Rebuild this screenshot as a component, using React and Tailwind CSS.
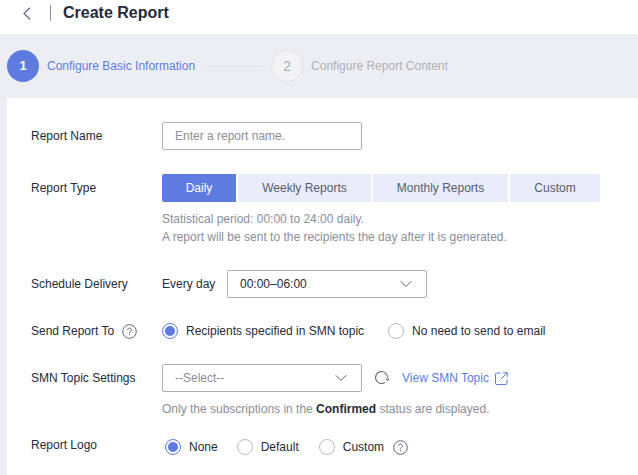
import React from "react";
import { ChevronDown } from "lucide-react";

const HelpIcon = () => (
  <svg width="15" height="15" viewBox="0 0 15 15" fill="none" className="shrink-0">
    <circle cx="7.5" cy="7.5" r="6.8" stroke="#5f6680" strokeWidth="1" />
    <path d="M5.6 5.9c0-1.1.9-1.8 1.9-1.8s1.9.7 1.9 1.7c0 1.5-1.9 1.5-1.9 3" stroke="#5f6680" strokeWidth="1" />
    <rect x="7" y="10" width="1" height="1.2" fill="#5f6680" />
  </svg>
);

const Radio = ({ checked, label, className = "" }) => (
  <div className={`flex items-center ${className}`}>
    {checked ? (
      <span className="flex h-4 w-4 items-center justify-center rounded-full border border-[#5e7ce0]">
        <span className="h-2.5 w-2.5 rounded-full bg-[#5e7ce0]" />
      </span>
    ) : (
      <span className="h-4 w-4 rounded-full border border-[#b8bcc9]" />
    )}
    <span className="ml-2 text-[#252b3a]">{label}</span>
  </div>
);

const Row = ({ label, children, className = "" }) => (
  <div className={`flex ${className}`}>
    <div className="w-[131px] shrink-0 text-[#252b3a]">{label}</div>
    {children}
  </div>
);

const App = () => (
  <div className="h-[475px] w-[638px] overflow-hidden bg-[#edeef4] font-['Liberation_Sans',Arial,sans-serif] text-xs leading-[18px]">
    <header className="flex h-[34px] items-center bg-white pb-2 pl-[23px]">
      <svg width="8" height="13" viewBox="0 0 8 13" fill="none" className="shrink-0">
        <path d="M7 .7 1 6.5l6 5.8" stroke="#5f6680" strokeWidth="1.2" />
      </svg>
      <span className="ml-[19px] h-4 w-px bg-[#8f93a0]" />
      <h1 className="ml-3 text-base font-bold text-[#252b3a]">Create Report</h1>
    </header>

    <div className="flex h-16 items-center pl-[7px]">
      <span className="flex h-8 w-8 items-center justify-center rounded-full bg-[#5e7ce0] text-[13px] font-bold text-white">1</span>
      <span className="ml-2 text-[#5e7ce0]">Configure Basic Information</span>
      <span className="ml-2 h-px w-[60px] bg-[#dfe1e6]" />
      <span className="ml-2 flex h-8 w-8 items-center justify-center rounded-full border border-[#dfe1e6] bg-[#f3f3f5] text-sm text-[#adb0b8]">2</span>
      <span className="ml-2 text-[#adb0b8]">Configure Report Content</span>
    </div>

    <main className="ml-[7px] h-[377px] bg-white pl-6 pt-6">
      <Row label="Report Name" className="items-center">
        <div className="flex h-7 w-[200px] items-center rounded-[2px] border border-[#adb0b8] px-3 text-[#8a8e99]">Enter a report name.</div>
      </Row>

      <Row label="Report Type" className="mt-6 h-7 items-center">
        <div className="flex gap-0.5 text-[#575d6c]">
          <div className="flex h-7 w-[74px] items-center justify-center rounded-l-[2px] bg-[#5e7ce0] text-white">Daily</div>
          <div className="flex h-7 w-[133px] items-center justify-center bg-[#e9edfa]">Weekly Reports</div>
          <div className="flex h-7 w-[135px] items-center justify-center bg-[#e9edfa]">Monthly Reports</div>
          <div className="flex h-7 w-[90px] items-center justify-center rounded-r-[2px] bg-[#e9edfa]">Custom</div>
        </div>
      </Row>
      <div className="ml-[131px] mt-2 text-[#8a8e99]">
        <p>Statistical period: 00:00 to 24:00 daily.</p>
        <p>A report will be sent to the recipients the day after it is generated.</p>
      </div>

      <Row label="Schedule Delivery" className="mt-6 items-center">
        <span className="w-[65px] text-[#252b3a]">Every day</span>
        <div className="flex h-7 w-[200px] items-center justify-between rounded-[2px] border border-[#adb0b8] pl-3 pr-[10px] text-[#252b3a]">
          <span>00:00–06:00</span>
          <ChevronDown size={20} strokeWidth={1.2} className="text-[#575d6c]" />
        </div>
      </Row>

      <div className="mt-6 flex items-center">
        <div className="flex w-[131px] shrink-0 items-center gap-2 text-[#252b3a]">
          <span>Send Report To</span>
          <HelpIcon />
        </div>
        <Radio checked label="Recipients specified in SMN topic" />
        <Radio label="No need to send to email" className="ml-6" />
      </div>

      <Row label="SMN Topic Settings" className="mt-6 items-center">
        <div className="flex h-7 w-[200px] items-center justify-between rounded-[2px] border border-[#adb0b8] pl-3 pr-[10px] text-[#8a8e99]">
          <span>--Select--</span>
          <ChevronDown size={20} strokeWidth={1.2} className="text-[#575d6c]" />
        </div>
        <svg width="16" height="16" viewBox="0 0 16 16" fill="none" className="ml-3">
          <path d="M11 12.4A6 6 0 1 1 13.5 8" stroke="#5f6680" strokeWidth="1.1" />
          <path d="M11.8 8.6l1.7 1.7 1.7-1.7" stroke="#5f6680" strokeWidth="1.1" />
        </svg>
        <span className="ml-3 text-[#5e7ce0]">View SMN Topic</span>
        <svg width="13" height="13" viewBox="0 0 13 13" fill="none" className="ml-1.5">
          <path d="M5.5 1H1.8a1.3 1.3 0 0 0-1.3 1.3v8.9a1.3 1.3 0 0 0 1.3 1.3h8.9a1.3 1.3 0 0 0 1.3-1.3V7.5" stroke="#5e7ce0" strokeWidth="1" />
          <path d="M8 .7h4.3V5M12 1 6 7" stroke="#5e7ce0" strokeWidth="1" />
        </svg>
      </Row>
      <p className="ml-[131px] mt-2 text-[#8a8e99]">
        Only the subscriptions in the <span className="font-bold text-[#252b3a]">Confirmed</span> status are displayed.
      </p>

      <Row label="Report Logo" className="mt-[18px]">
        <div className="mt-0.5 flex items-center pl-[3px]">
          <Radio checked label="None" />
          <Radio label="Default" className="ml-[19px]" />
          <Radio label="Custom" className="ml-5" />
          <span className="ml-[9px]"><HelpIcon /></span>
        </div>
      </Row>
    </main>
  </div>
);

export default App;
